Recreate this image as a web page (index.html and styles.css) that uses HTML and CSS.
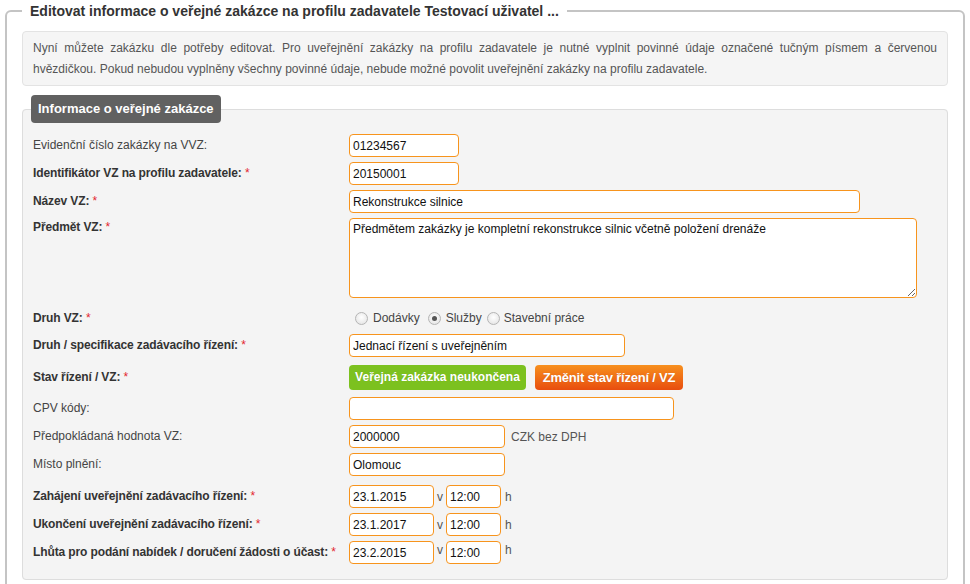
FILE: index.html
```html
<!DOCTYPE html>
<html lang="cs">
<head>
<meta charset="utf-8">
<title>Editovat informace o veřejné zakázce</title>
<link rel="stylesheet" href="styles.css">
</head>
<body>
<fieldset class="outer">
  <legend class="outer-legend">Editovat informace o veřejné zakázce na profilu zadavatele Testovací uživatel ...</legend>
  <div class="info">
    <div class="info-line">Nyní můžete zakázku dle potřeby editovat. Pro uveřejnění zakázky na profilu zadavatele je nutné vyplnit povinné údaje označené tučným písmem a červenou</div>
    <div>hvězdičkou. Pokud nebudou vyplněny všechny povinné údaje, nebude možné povolit uveřejnění zakázky na profilu zadavatele.</div>
  </div>

  <fieldset class="panel">
    <legend class="tab">Informace o veřejné zakázce</legend>

    <div class="row">
      <label class="lbl">Evidenční číslo zakázky na VVZ:</label>
      <input class="inp w110" type="text" value="01234567">
    </div>
    <div class="row">
      <label class="lbl req">Identifikátor VZ na profilu zadavatele: <span class="star">*</span></label>
      <input class="inp w110" type="text" value="20150001">
    </div>
    <div class="row">
      <label class="lbl req">Název VZ: <span class="star">*</span></label>
      <input class="inp w511" type="text" value="Rekonstrukce silnice">
    </div>
    <div class="row row-top">
      <label class="lbl req top">Předmět VZ: <span class="star">*</span></label>
      <textarea class="inp area">Předmětem zakázky je kompletní rekonstrukce silnic včetně položení drenáže</textarea>
    </div>
    <div class="row row-radio">
      <label class="lbl req">Druh VZ: <span class="star">*</span></label>
      <div class="radios">
        <input class="radio first" type="radio" name="druh" id="r1"><label for="r1" class="rlbl">Dodávky</label>
        <input class="radio" type="radio" name="druh" id="r2" checked><label for="r2" class="rlbl">Služby</label>
        <input class="radio r3" type="radio" name="druh" id="r3"><label for="r3" class="rlbl">Stavební práce</label>
      </div>
    </div>
    <div class="row">
      <label class="lbl req">Druh / specifikace zadávacího řízení: <span class="star">*</span></label>
      <input class="inp w276" type="text" value="Jednací řízení s uveřejněním">
    </div>
    <div class="row row-btn">
      <label class="lbl req">Stav řízení / VZ: <span class="star">*</span></label>
      <span class="btn green">Veřejná zakázka neukončena</span>
      <span class="btn orange">Změnit stav řízení / VZ</span>
    </div>
    <div class="row">
      <label class="lbl">CPV kódy:</label>
      <input class="inp w325" type="text" value="">
    </div>
    <div class="row">
      <label class="lbl">Předpokládaná hodnota VZ:</label>
      <input class="inp w156" type="text" value="2000000">
      <span class="unit czk">CZK bez DPH</span>
    </div>
    <div class="row">
      <label class="lbl">Místo plnění:</label>
      <input class="inp w156" type="text" value="Olomouc">
    </div>
    <div class="row row-date first-date">
      <label class="lbl req">Zahájení uveřejnění zadávacího řízení: <span class="star">*</span></label>
      <input class="inp date" type="text" value="23.1.2015">
      <span class="unit v">v</span>
      <input class="inp time" type="text" value="12:00">
      <span class="unit h">h</span>
    </div>
    <div class="row row-date">
      <label class="lbl req">Ukončení uveřejnění zadávacího řízení: <span class="star">*</span></label>
      <input class="inp date" type="text" value="23.1.2017">
      <span class="unit v">v</span>
      <input class="inp time" type="text" value="12:00">
      <span class="unit h">h</span>
    </div>
    <div class="row row-date">
      <label class="lbl req">Lhůta pro podání nabídek / doručení žádosti o účast: <span class="star">*</span></label>
      <input class="inp date" type="text" value="23.2.2015">
      <span class="unit v raised">v</span>
      <input class="inp time" type="text" value="12:00">
      <span class="unit h raised">h</span>
    </div>
  </fieldset>
</fieldset>
</body>
</html>
```
FILE: styles.css
```css
html, body {
  margin: 0;
  padding: 0;
  overflow: hidden;
  background: #ffffff;
  font-family: "Liberation Sans", Arial, sans-serif;
  font-size: 12px;
  color: #444;
}

.outer {
  margin: 0 5px;
  padding: 9px 15px 40px 15px;
  border: 2px solid #c4c4c4;
  border-radius: 6px;
  min-width: 0;
}

.outer-legend {
  padding: 0 8px;
  font-size: 14px;
  font-weight: bold;
  color: #333;
  line-height: 22px;
}

.info {
  background: #f5f5f5;
  border: 1px solid #e3e3e3;
  border-radius: 4px;
  padding: 6px 10px 5px 10px;
  line-height: 21px;
  color: #555;
}

.info-line {
  text-align: justify;
  text-align-last: justify;
}

.panel {
  margin: 9px 0 0 0;
  padding: 11px 10px 10px 10px;
  background: #f4f4f4;
  border: 1px solid #dddddd;
  border-radius: 4px;
  min-width: 0;
}

.tab {
  margin-left: -2px;
  padding: 0 7px;
  background: #616161;
  color: #fff;
  font-weight: bold;
  font-size: 13px;
  line-height: 28px;
  border-radius: 4px;
}

.row {
  display: flex;
  align-items: center;
  margin-bottom: 5px;
}

.lbl {
  flex: 0 0 316px;
  color: #444;
  line-height: 23px;
}

.req {
  font-weight: bold;
  color: #333;
  letter-spacing: -0.12px;
}

.star {
  color: #e3262f;
  font-weight: normal;
}

.row-top {
  align-items: flex-start;
}

.lbl.top {
  line-height: 18px;
}

.inp {
  box-sizing: border-box;
  height: 23px;
  margin: 0;
  padding: 0 3px;
  border: 1px solid #f7941d;
  border-radius: 4px;
  background: #fff;
  font-family: "Liberation Sans", Arial, sans-serif;
  font-size: 12px;
  color: #111;
  outline: none;
}

.w110 { width: 110px; }
.w511 { width: 511px; }
.w276 { width: 276px; }
.w325 { width: 325px; }
.w156 { width: 156px; }

.area {
  width: 568px;
  height: 80px;
  padding: 3px 3px;
  line-height: 15px;
  resize: vertical;
}

.row-radio {
  height: 26px;
  align-items: flex-end;
}

.radios {
  display: flex;
  align-items: center;
  color: #444;
  font-size: 12px;
  height: 22px;
}

.row-radio .lbl {
  line-height: 22px;
}

.radio {
  appearance: none;
  -webkit-appearance: none;
  box-sizing: border-box;
  width: 13px;
  height: 13px;
  margin: 0 5px 0 8px;
  border: 1px solid #b5b5b5;
  border-radius: 50%;
  background: radial-gradient(circle at 50% 40%, #ffffff 0%, #e6e6e6 80%);
  position: relative;
}

.radio.first {
  margin-left: 6px;
}

.radio.r3 {
  margin-left: 5px;
  margin-right: 4px;
}

.radio:checked::after {
  content: "";
  position: absolute;
  left: 3px;
  top: 3px;
  width: 5px;
  height: 5px;
  border-radius: 50%;
  background: #555;
}

.row-btn {
  height: 31px;
  margin-bottom: 4px;
}

.btn {
  display: inline-block;
  box-sizing: border-box;
  height: 25px;
  line-height: 25px;
  padding: 0;
  border-radius: 4px;
  color: #fff;
  font-weight: bold;
  white-space: nowrap;
  text-align: center;
  text-shadow: 0 0 1px rgba(0, 0, 0, 0.15);
}

.green {
  width: 177px;
  font-size: 12px;
  background: #7cc11f;
}

.orange {
  margin-left: 9px;
  width: 148px;
  font-size: 13px;
  letter-spacing: -0.2px;
  background: linear-gradient(#f7901e, #e84d0e);
}

.unit {
  color: #555;
  font-size: 12px;
}

.czk {
  margin-left: 6px;
}

.first-date {
  margin-top: 9px;
}

.date { width: 85px; }
.time { width: 55px; }

.v {
  width: 12px;
  text-align: center;
}

.h {
  margin-left: 4px;
}

.raised {
  position: relative;
  top: -3px;
}
```
